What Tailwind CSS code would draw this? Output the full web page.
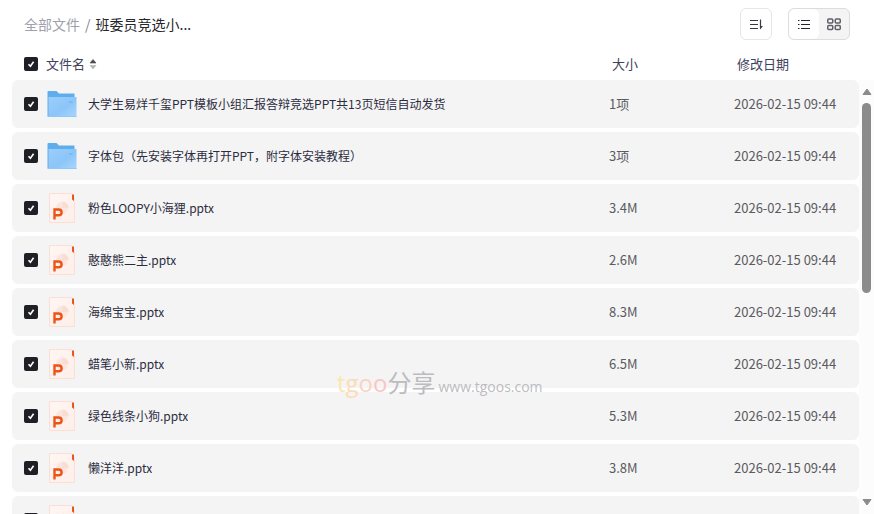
<!DOCTYPE html>
<html lang="zh-CN">
<head>
    <meta charset="UTF-8">
    <meta name="viewport" content="width=device-width, initial-scale=1.0">
    <title>班委员竞选小...</title>
    <script src="https://cdn.jsdelivr.net/npm/@tailwindcss/browser@4"></script>
</head>
<body class="h-screen overflow-hidden bg-white font-['Noto_Sans_CJK_SC',sans-serif] text-[#25262b]">
    <!-- icons -->
    <svg class="absolute size-0">
        <defs>
            <linearGradient id="folderFront" x1="0" y1="0" x2="1" y2="1">
                <stop offset="0" stop-color="#9bcffb"/>
                <stop offset="0.55" stop-color="#8cc5f9"/>
                <stop offset="1" stop-color="#a9d6fd"/>
            </linearGradient>
            <linearGradient id="pptPaper" x1="0" y1="0" x2="1" y2="1">
                <stop offset="0" stop-color="#fff6f3"/>
                <stop offset="1" stop-color="#fdeee9"/>
            </linearGradient>
        </defs>
        <symbol id="folder" viewBox="0 0 32 32">
            <path d="M1.500 4a1 1 0 0 1 1-1h8l2.500 2.500h15.500V28h-27z" fill="#60adeb"/>
            <path d="M2.500 9h28v20h-28z" fill="url(#folderFront)"/>
            <path d="M1.500 28.500h29" stroke="#8fc8f8"/>
            <path d="M23 14h3.500" stroke="#74b7f2" stroke-width="1.500"/>
        </symbol>
        <symbol id="ppt" viewBox="0 0 32 32">
            <path d="M3.500 1.500h22l3 6v23h-25z" fill="url(#pptPaper)" stroke="#fbdfd5"/>
            <path d="M26 2.500h2v6.500l-2-1.500z" fill="#e9561d"/>
            <circle cx="16" cy="16" r="6" fill="#fbe6df"/>
            <path d="M16.500 9.500a6.500 6.500 0 0 1 6 6.500h-6z" fill="#f9dcd2"/>
            <path d="M8.500 27.500V17.500h4.200a2.700 2.700 0 0 1 0 5.800H8.500" fill="none" stroke="#ee5315" stroke-width="2.400"/>
        </symbol>
        <symbol id="tick" viewBox="0 0 14 14">
            <path d="M4.500 7.200l1.900 2 3.200-4.400" fill="none" stroke="#fff" stroke-width="1.600"/>
        </symbol>
    </svg>

    <main class="flex h-full flex-col">
        <header class="flex h-12 shrink-0 items-center justify-between pr-6 pl-6">
            <nav class="flex items-center text-sm">
                <a href="#" class="text-[#a0a0ab]">全部文件</a>
                <span class="px-[5px] text-[#84858d]">/</span>
                <a href="#" class="text-[#25262b]">班委员竞选小...</a>
            </nav>
            <div class="flex gap-4">
                <button type="button" aria-label="排序" class="grid size-8 place-items-center rounded-md border border-[#e6e6e8] bg-white">
                    <svg class="size-4" viewBox="0 0 16 16" fill="none" stroke="#3a3b40" stroke-width="1.200">
                        <path d="M2 4.500h8M2 8.500h8M2 12.500h8"/>
                        <path d="M12.500 3.500v9"/>
                        <path d="M12 10h3l-3 3.500z" fill="#3a3b40" stroke="none"/>
                    </svg>
                </button>
                <div class="flex h-8 overflow-hidden rounded-md border border-[#dcdcdf] bg-[#f4f4f5]">
                    <button type="button" aria-label="列表" class="grid w-[30px] place-items-center rounded-md bg-white">
                        <svg class="size-4" viewBox="0 0 16 16" stroke="#25262b" stroke-width="1.200">
                            <path d="M2 4.500h1.500M5 4.500h9M2 8.500h1.500M5 8.500h9M2 12.500h1.500M5 12.500h9"/>
                        </svg>
                    </button>
                    <button type="button" aria-label="网格" class="grid w-[30px] place-items-center">
                        <svg class="size-4" viewBox="0 0 16 16" fill="none" stroke="#606167" stroke-width="1.500">
                            <rect x="1.750" y="3" width="5" height="4" rx="1"/>
                            <rect x="9.250" y="3" width="5" height="4" rx="1"/>
                            <rect x="1.750" y="9.500" width="5" height="4" rx="1"/>
                            <rect x="9.250" y="9.500" width="5" height="4" rx="1"/>
                        </svg>
                    </button>
                </div>
            </div>
        </header>

        <section class="relative flex min-h-0 flex-1 overflow-hidden pl-3">
            <div class="min-w-0 flex-1">
                <table class="w-full table-fixed border-separate border-spacing-x-0 border-spacing-y-1 text-left">
                    <colgroup>
                        <col class="w-[34px]">
                        <col>
                        <col class="w-[125px]">
                        <col class="w-[125px]">
                    </colgroup>
                    <thead class="text-[13px] leading-6 text-[#41415a]">
                        <tr class="h-6">
                            <th class="p-0 pl-3 font-normal">
                                <label class="grid size-[14px]">
                                    <input type="checkbox" checked aria-label="全选" class="col-start-1 row-start-1 size-[14px] appearance-none rounded-xs bg-[#1f2026]">
                                    <svg class="pointer-events-none col-start-1 row-start-1 size-[14px]"><use href="#tick"/></svg>
                                </label>
                            </th>
                            <th class="p-0 font-normal">
                                <button type="button" class="flex items-center gap-1">
                                    文件名
                                    <svg class="h-3 w-2" viewBox="0 0 8 12">
                                        <path d="M1 5L4 1.500 7 5z" fill="#4a4a4f" stroke="#4a4a4f" stroke-width=".6"/>
                                        <path d="M1 7.500L4 11l3-3.500z" fill="#b4b4b8" stroke="#b4b4b8" stroke-width=".6"/>
                                    </svg>
                                </button>
                            </th>
                            <th class="p-0 pl-[3px] font-normal">大小</th>
                            <th class="p-0 pl-[3px] font-normal">修改日期</th>
                        </tr>
                    </thead>
                    <tbody id="fileList"></tbody>
                </table>
            </div>
            <!-- scrollbar -->
            <div class="mt-8 flex w-[15px] shrink-0 flex-col items-center bg-[#fcfcfc] py-2">
                <svg class="h-2 w-[10px] shrink-0" viewBox="0 0 10 8"><path d="M1 6.500L5 1l4 5.500z" fill="#8b8b8b" stroke="#8b8b8b" stroke-linejoin="round"/></svg>
                <div class="my-[7px] w-full flex-1">
                    <div class="mx-auto h-[49%] w-[9px] rounded-full bg-[#8b8b8b]"></div>
                </div>
                <svg class="h-2 w-[10px] shrink-0" viewBox="0 0 10 8"><path d="M1 1.500L5 7l4-5.500z" fill="#8b8b8b" stroke="#8b8b8b" stroke-linejoin="round"/></svg>
            </div>
        </section>
    </main>

    <!-- watermark -->
    <div class="pointer-events-none absolute top-[367px] left-[337px] flex items-baseline gap-[3px] font-['Open_Sans','Noto_Sans_CJK_SC',sans-serif] leading-8 whitespace-nowrap text-[#bcbcbf]">
        <span class="text-2xl"><span class="text-[#fae7b0]">t</span><span class="text-[#fbdcb8]">g</span><span class="text-[#fad3c0]">o</span><span class="text-[#f9c6c4]">o</span>分享</span>
        <span class="text-sm">www.tgoos.com</span>
    </div>

    <script>
        const files = [
            { icon: 'folder', name: '大学生易烊千玺PPT模板小组汇报答辩竞选PPT共13页短信自动发货', size: '1项', date: '2026-02-15 09:44' },
            { icon: 'folder', name: '字体包（先安装字体再打开PPT，附字体安装教程）', size: '3项', date: '2026-02-15 09:44' },
            { icon: 'ppt', name: '粉色LOOPY小海狸.pptx', size: '3.4M', date: '2026-02-15 09:44' },
            { icon: 'ppt', name: '憨憨熊二主.pptx', size: '2.6M', date: '2026-02-15 09:44' },
            { icon: 'ppt', name: '海绵宝宝.pptx', size: '8.3M', date: '2026-02-15 09:44' },
            { icon: 'ppt', name: '蜡笔小新.pptx', size: '6.5M', date: '2026-02-15 09:44' },
            { icon: 'ppt', name: '绿色线条小狗.pptx', size: '5.3M', date: '2026-02-15 09:44' },
            { icon: 'ppt', name: '懒洋洋.pptx', size: '3.8M', date: '2026-02-15 09:44' },
            { icon: 'ppt', name: '', size: '', date: '' }
        ];

        document.getElementById('fileList').innerHTML = files.map(file => `
            <tr class="h-12">
                <td class="rounded-l-md bg-[#f4f4f4] p-0 pl-3">
                    <label class="grid size-[14px]">
                        <input type="checkbox" checked aria-label="${file.name || '文件'}" class="col-start-1 row-start-1 size-[14px] appearance-none rounded-xs bg-[#1f2026]">
                        <svg class="pointer-events-none col-start-1 row-start-1 size-[14px]"><use href="#tick"/></svg>
                    </label>
                </td>
                <td class="bg-[#f4f4f4] p-0">
                    <div class="flex items-center gap-[10px]">
                        <svg class="size-8 shrink-0"><use href="#${file.icon}"/></svg>
                        <a href="#" class="truncate text-xs text-[#2c2c41]">${file.name}</a>
                    </div>
                </td>
                <td class="bg-[#f4f4f4] p-0 text-[13px] text-[#5a5a5f]">${file.size}</td>
                <td class="rounded-r-md bg-[#f4f4f4] p-0 text-[13px] whitespace-nowrap text-[#5a5a5f]">${file.date}</td>
            </tr>
        `).join('');
    </script>
</body>
</html>
